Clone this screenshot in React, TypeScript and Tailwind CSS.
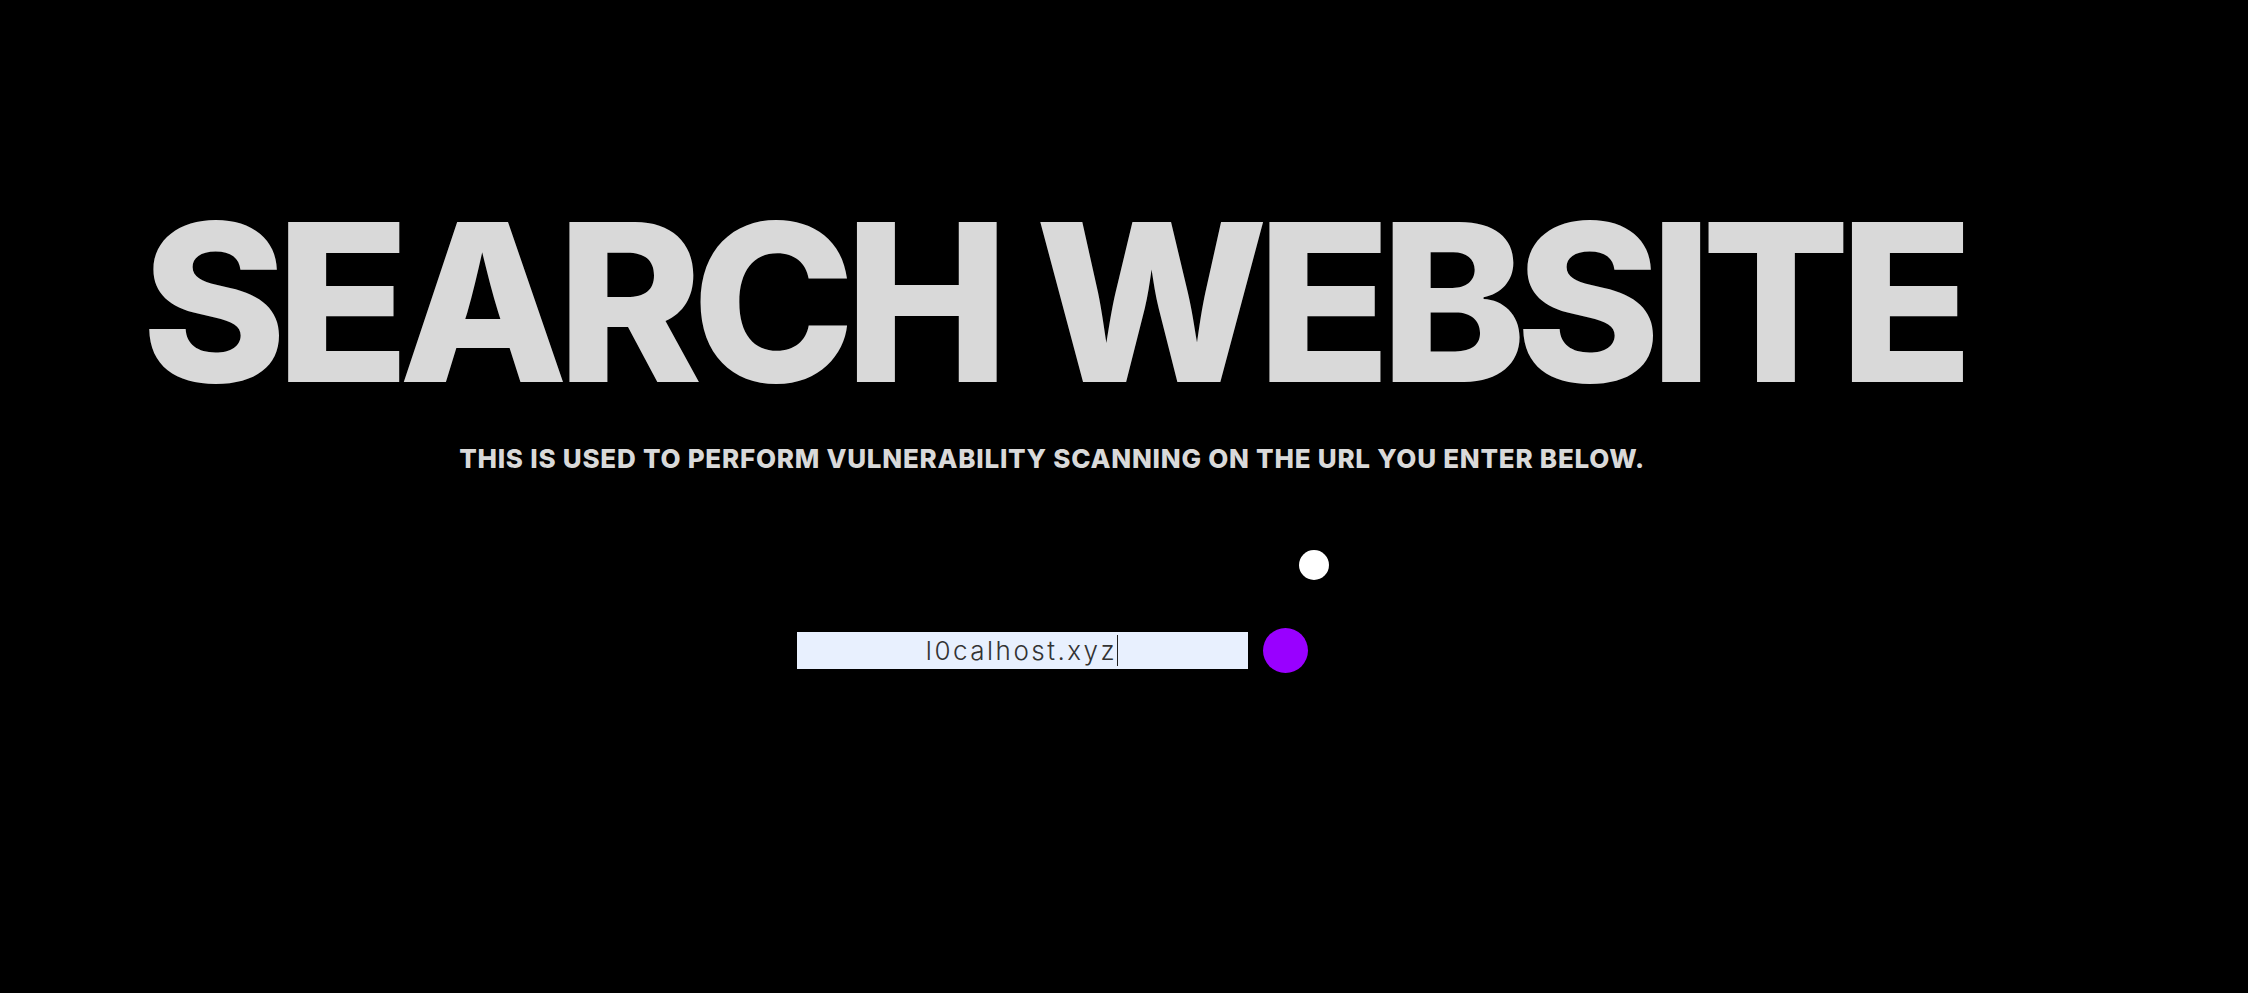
export default function App() {
  return (
    <div className="min-h-[993px] w-full bg-black">
      <div className="flex flex-col items-center pr-[144px] pt-[192px]">
        <h1
          className="text-[220px] font-extrabold leading-none tracking-[-11px] text-[#d9d9d9]"
          style={{ fontFamily: 'Inter, "Liberation Sans", sans-serif' }}
        >
          SEARCH WEBSITE
        </h1>

        <p
          className="mt-[34px] text-[26px] font-extrabold uppercase leading-none tracking-[0.75px] text-[#d9d9d9]"
          style={{ fontFamily: 'Inter, "Liberation Sans", sans-serif' }}
        >
          This is used to perform vulnerability scanning on the url you enter below.
        </p>

        <div className="mt-[78px] flex w-[511px] justify-end">
          <div className="mr-[-21px] h-[30px] w-[30px] rounded-full bg-white" />
        </div>

        <div className="mt-[48px] flex items-center gap-[15px]">
          <div className="flex h-[37px] w-[451px] items-center justify-center bg-[#e8f0fe]">
            <span
              className="text-[26px] font-light leading-none tracking-[2.5px] text-[#333]"
              style={{ fontFamily: 'Inter, "Liberation Sans", sans-serif' }}
            >
              l0calhost.xyz
            </span>
            <span className="h-[31px] w-px bg-[#222]" />
          </div>
          <button className="h-[45px] w-[45px] rounded-full bg-[#9900ff]" />
        </div>
      </div>
    </div>
  );
}
